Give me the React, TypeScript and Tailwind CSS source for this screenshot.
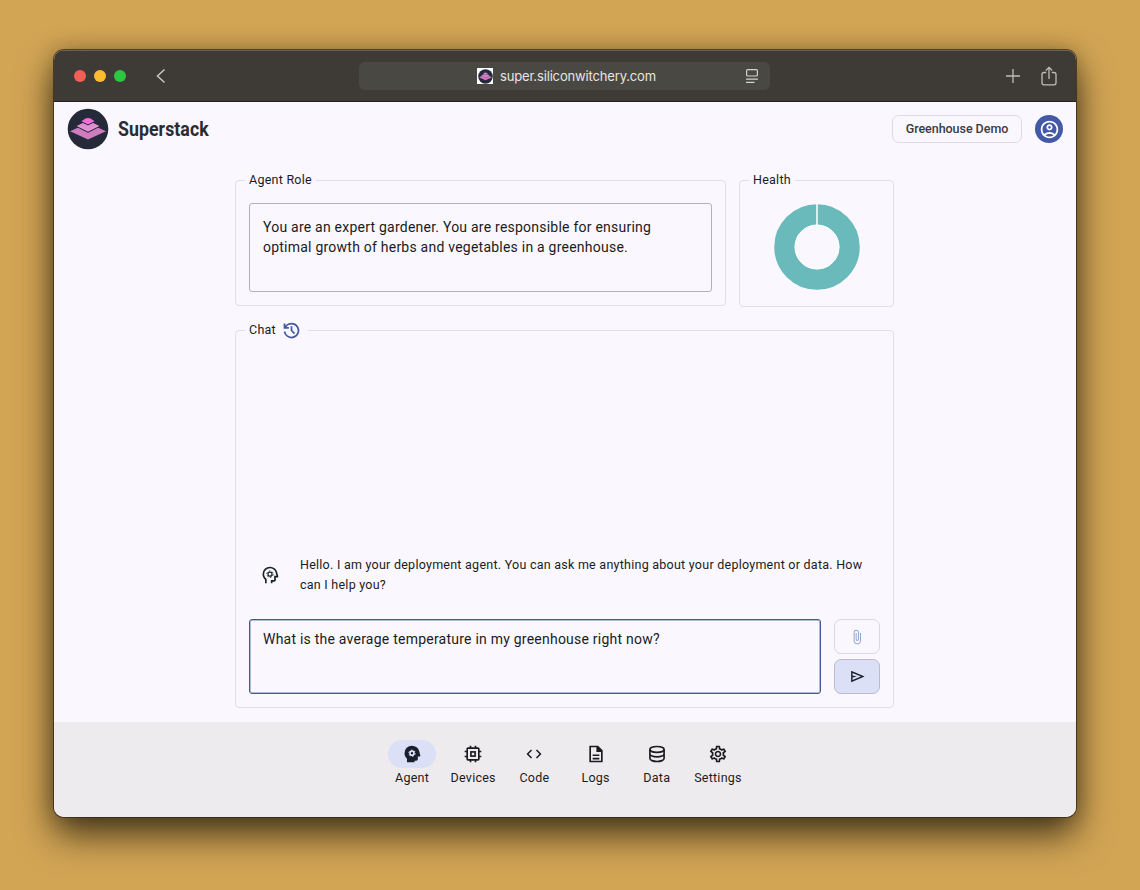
import type { ReactNode } from "react";
import { MdAttachFile, MdCode, MdOutlineAccountCircle, MdOutlineSettings } from "react-icons/md";

function StackLogo({ className }: { className: string }) {
  return (
    <svg viewBox="0 0 42 42" className={className}>
      <circle cx="21" cy="21" r="20.3" fill="#252a38" />
      <path d="M3 23.2 21 15l18 8.2L21 31.500Z" fill="#cf7bc0" />
      <path d="M8.500 18 21 12l12.500 6L21 24.300Z" fill="#e08fd4" stroke="#252a38" strokeWidth="1" />
      <path d="M13.500 13.200 18.500 10q2.500-1 5 0l5 3.200L21 17Z" fill="#ef6ed8" stroke="#252a38" strokeWidth="1" />
    </svg>
  );
}

function HistoryIcon() {
  return (
    <svg viewBox="0 0 24 24" className="size-[21px]" fill="#435a9f">
      <path d="M12 21q-3.450 0-6.012-2.287T3.050 13H5.100q.35 2.600 2.313 4.300T12 19q2.925 0 4.963-2.037T19 12t-2.037-4.962T12 5q-1.725 0-3.225.8T6.250 8H9v2H3V4h2v2.350q1.275-1.600 3.113-2.475T12 3q1.875 0 3.513.713t2.850 1.924 1.925 2.850T21 12t-.712 3.513-1.925 2.850-2.850 1.925T12 21Zm2.800-4.800L11 12.400V7h2v4.600l3.200 3.200-1.400 1.400Z" />
    </svg>
  );
}

function HeadIcon({ filled, className }: { filled?: boolean; className: string }) {
  return (
    <svg viewBox="0 0 24 24" className={className} fill="#17202b">
      {filled ? (
        <path d="M6 22v-4.300q-1.425-1.300-2.212-3.037T3 11q0-3.750 2.625-6.375T12 2q3.125 0 5.538 1.838t3.137 4.787l1.300 5.125q.125.475-.175.863T21 15h-2v3q0 .825-.587 1.413T17 20h-2v2H6Z" />
      ) : (
        <path d="M6 22v-4.300q-1.425-1.300-2.212-3.037T3 11q0-3.750 2.625-6.375T12 2q3.125 0 5.538 1.838t3.137 4.787l1.300 5.125q.125.475-.175.863T21 15h-2v3q0 .825-.587 1.413T17 20h-2v2h-2v-4h4v-5h2.700l-.950-3.875q-.575-2.275-2.450-3.700T12 4Q9.100 4 7.050 6.025T5 10.950q0 1.500.613 2.850t1.737 2.400l.65.600V22H6Z" />
      )}
      <g fill="none" stroke={filled ? "#dce0f7" : "#17202b"}>
        <circle cx="12" cy="11" r="2.400" strokeWidth={filled ? 2 : 1.400} />
        <circle cx="12" cy="11" r="3.800" strokeWidth="1.200" strokeDasharray="1.900 2.080" />
      </g>
    </svg>
  );
}

function ChipIcon() {
  return (
    <svg viewBox="0 0 24 24" className="size-5" fill="none" stroke="currentColor" strokeWidth="2">
      <rect x="5" y="5" width="14" height="14" rx="1" />
      <rect x="9.500" y="9.500" width="5" height="5" />
      <path d="M9 2v3M15 2v3M9 19v3M15 19v3M2 9h3M2 15h3M19 9h3M19 15h3" />
    </svg>
  );
}

function DocumentIcon() {
  return (
    <svg viewBox="0 0 24 24" className="size-5" fill="none" stroke="currentColor" strokeWidth="2">
      <path d="M5 3h9l5 5v13H5ZM8 13.500h8M8 17.500h8" />
      <path d="M13.500 3v5.500H19" fill="currentColor" />
    </svg>
  );
}

function DatabaseIcon() {
  return (
    <svg viewBox="0 0 24 24" className="size-5" fill="none" stroke="currentColor" strokeWidth="2">
      <ellipse cx="12" cy="6.500" rx="8.500" ry="3.500" />
      <path d="M3.500 6.500v11c0 1.900 3.800 3.500 8.500 3.500s8.500-1.600 8.500-3.500v-11M3.500 12c0 1.900 3.800 3.500 8.500 3.500s8.500-1.600 8.500-3.500" />
    </svg>
  );
}

function NavItem({ icon, label, active }: { icon: ReactNode; label: string; active?: boolean }) {
  return (
    <button className="flex w-[61.2px] flex-col items-center">
      <span
        className={`flex h-7 w-[48px] items-center justify-center rounded-full ${active ? "bg-[#dce0f7]" : ""}`}
      >
        {icon}
      </span>
      <span className="whitespace-nowrap text-[12.5px] leading-5 tracking-[0.25px]">{label}</span>
    </button>
  );
}

function Panel({ legend, className, children }: { legend: ReactNode; className: string; children: ReactNode }) {
  return (
    <fieldset className={`min-w-0 rounded-[4px] border border-[#dfdfe4] ${className}`}>
      <legend className="ml-[9px] flex h-5 items-center px-1 text-[12.5px] tracking-[0.25px]">{legend}</legend>
      {children}
    </fieldset>
  );
}

export default function App() {
  return (
    <div className="h-[890px] w-[1140px] overflow-hidden bg-[#d2a554] px-[54px] pt-[50px] font-['Roboto',sans-serif] text-[#1b1b21]">
      <div className="flex h-[767px] w-[1022px] flex-col overflow-hidden rounded-[10px] bg-[#faf8fe] shadow-[0_0_0_1px_rgba(45,35,15,0.7),0_18px_36px_rgba(0,0,0,0.65),0_0_22px_rgba(0,0,0,0.25)]">
        <header className="flex h-[52px] shrink-0 items-center border-t border-b border-t-[#68645c] border-b-[#22211e] bg-[#3e3a35]">
          <div className="ml-5 flex w-[285px] items-center gap-2">
            <span className="size-3 rounded-full bg-[#f35f57]" />
            <span className="size-3 rounded-full bg-[#fbbd2f]" />
            <span className="size-3 rounded-full bg-[#2bc741]" />
            <svg viewBox="0 0 10 16" className="ml-[22px] h-4 w-2.5" fill="none" stroke="#c8c6c3" strokeWidth="1.500">
              <path d="M8.500 1.500 1.500 8l7 6.500" />
            </svg>
          </div>
          <div className="flex h-7 w-[411px] items-center rounded-[6px] bg-[#4a4843]">
            <span className="ml-[118px] flex size-4 items-center justify-center bg-white">
              <StackLogo className="size-[15px]" />
            </span>
            <span className="ml-[7px] w-[160px] whitespace-nowrap pt-px font-['Inter',sans-serif] text-[13px] tracking-[-0.16px] text-[#e6e5e3]">
              super.siliconwitchery.com
            </span>
            <svg viewBox="0 0 14 16" className="ml-[85px] h-4 w-3.5" fill="none" stroke="#d4d2cf" strokeWidth="1.200">
              <rect x="1.600" y="1.600" width="10.800" height="6.400" rx="1.300" />
              <path d="M1 11.200h12M1 14.300h8.500" />
            </svg>
          </div>
          <svg viewBox="0 0 14 14" className="ml-[236px] size-3.5" stroke="#bfbdb9" strokeWidth="1.300">
            <path d="M7 0v14M0 7h14" />
          </svg>
          <svg viewBox="0 0 16 20" className="ml-[21px] h-5 w-4" fill="none" stroke="#bfbdb9" strokeWidth="1.300">
            <path d="M5.200 6.500H3a2 2 0 0 0-2 2v8.300a2 2 0 0 0 2 2h10a2 2 0 0 0 2-2V8.500a2 2 0 0 0-2-2h-2.200M8 13V1.500M4.800 4.500 8 1.300l3.200 3.200" />
          </svg>
        </header>

        <div className="flex h-[54px] shrink-0 items-center justify-between pl-[13px] pr-[13px]">
          <div className="flex items-center gap-[9px]">
            <StackLogo className="size-[42px]" />
            <span className="w-[92px] origin-left scale-x-[0.845] whitespace-nowrap pt-0.5 text-[21px] font-bold tracking-[0.05px] text-[#2b2b32]">
              Superstack
            </span>
          </div>
          <div className="flex items-center gap-[13px]">
            <button className="h-7 w-[130px] rounded-[7px] border border-[#dcdce1] text-[12.5px] font-medium tracking-[-0.04px] text-[#3b3b41]">
              Greenhouse Demo
            </button>
            <span className="flex size-7 items-center justify-center rounded-full bg-[#4359a5] text-white">
              <MdOutlineAccountCircle className="size-[21px]" />
            </span>
          </div>
        </div>

        <main className="ml-[181px] flex w-[659px] grow flex-col pt-[14px]">
          <div className="flex items-start justify-between">
            <Panel className="h-[136px] w-[491px]" legend="Agent Role">
              <div className="mx-[13px] mt-[13px] h-[89px] rounded-[3px] border border-[#b2b1b9] px-[13px] pt-[13px] text-[14px] leading-5 tracking-[0.23px]">
                You are an expert gardener. You are responsible for ensuring
                <br />
                optimal growth of herbs and vegetables in a greenhouse.
              </div>
            </Panel>
            <Panel className="h-[137px] w-[155px]" legend="Health">
              <svg viewBox="0 0 90 90" className="ml-[31.5px] mt-3 size-[90px]">
                <circle cx="45" cy="45" r="32.500" fill="none" stroke="#6bbabb" strokeWidth="20.500" />
                <path d="M45 1v22" stroke="#fff" strokeWidth="1.500" />
                <circle cx="45" cy="45" r="22" fill="none" stroke="#fff" strokeWidth="1" />
              </svg>
            </Panel>
          </div>

          <Panel
            className="mt-[13px] h-[388px]"
            legend={
              <span className="flex items-center gap-[5px] pr-0.5 pt-px">
                Chat <HistoryIcon />
              </span>
            }
          >
            <div className="flex h-[368px] flex-col justify-end px-[13px] pb-[14px]">
              <div className="flex items-center">
                <HeadIcon className="ml-[11px] size-5 shrink-0" />
                <p className="ml-5 whitespace-nowrap text-[12.5px] leading-5 tracking-[0.25px]">
                  Hello. I am your deployment agent. You can ask me anything about your deployment or data. How
                  <br />
                  can I help you?
                </p>
              </div>
              <div className="mt-6 flex gap-[13px]">
                <div className="h-[75px] w-[572px] rounded-[3px] border border-[#435a94] px-[13px] pt-[9px] text-[14px] leading-5 tracking-[0.23px] shadow-[inset_0_0_0_1px_rgba(67,90,148,0.4)]">
                  What is the average temperature in my greenhouse right now?
                </div>
                <div className="flex w-[46px] flex-col gap-[5px]">
                  <button className="flex h-[35px] items-center justify-center rounded-[7px] border border-[#d9d9df] text-[#97a5ce]">
                    <MdAttachFile className="size-4" />
                  </button>
                  <button className="flex h-[35px] items-center justify-center rounded-[7px] border border-[#b7bcd1] bg-[#dce0f7]">
                    <svg viewBox="0 0 24 24" className="size-[17px]" fill="#19202c">
                      <path d="M3 20V4l19 8-19 8Zm2-3 11.850-5L5 7v3.500l6 1.500-6 1.500V17Z" />
                    </svg>
                  </button>
                </div>
              </div>
            </div>
          </Panel>
        </main>

        <nav className="flex h-[95px] shrink-0 justify-center bg-[#eeebef] pt-[18px]">
          <NavItem active label="Agent" icon={<HeadIcon filled className="size-5" />} />
          <NavItem label="Devices" icon={<ChipIcon />} />
          <NavItem label="Code" icon={<MdCode className="size-[18px]" />} />
          <NavItem label="Logs" icon={<DocumentIcon />} />
          <NavItem label="Data" icon={<DatabaseIcon />} />
          <NavItem label="Settings" icon={<MdOutlineSettings className="size-5" />} />
        </nav>
      </div>
    </div>
  );
}
